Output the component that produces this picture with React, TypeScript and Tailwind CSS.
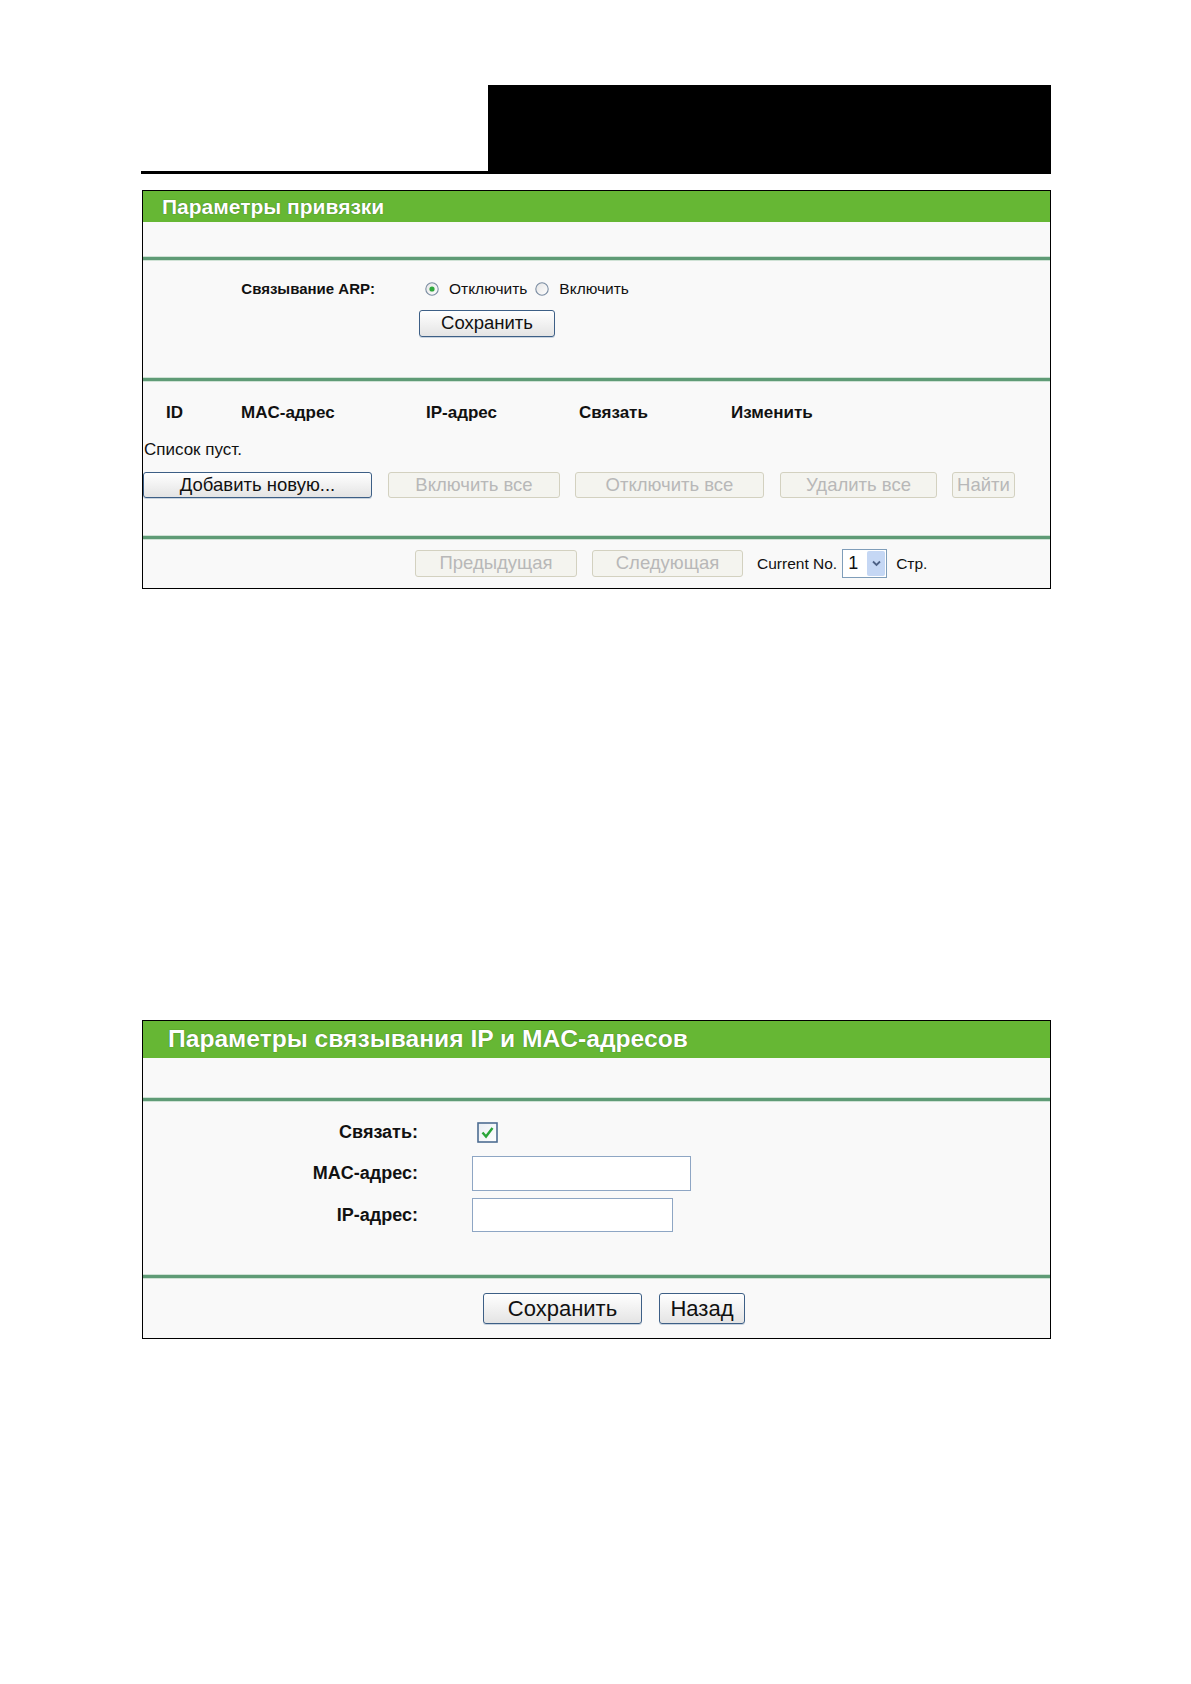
import React from 'react';

const FONT = "font-['Liberation_Sans',Arial,sans-serif]";

function Btn({ label, className = '', disabled = false }: { label: string; className?: string; disabled?: boolean }) {
  return (
    <div
      className={`flex items-center justify-center rounded-[3px] border leading-none ${
        disabled
          ? 'border-[#d3d1c0] bg-[#f4f4ef] text-[#b8b8b8]'
          : 'border-[#3d5f86] bg-gradient-to-b from-white to-[#e4e4e4] text-[#111] shadow-[0_1px_0_#c9d3de]'
      } ${className}`}
    >
      {label}
    </div>
  );
}

function Radio({ checked }: { checked?: boolean }) {
  return (
    <svg width="14" height="14" viewBox="0 0 14 14" className="shrink-0">
      <defs>
        <linearGradient id={checked ? 'rg1' : 'rg2'} x1="0" y1="0" x2="1" y2="1">
          <stop offset="0" stopColor="#e4e4e4" />
          <stop offset="1" stopColor="#ffffff" />
        </linearGradient>
      </defs>
      <circle cx="7" cy="7" r="6.2" fill={`url(#${checked ? 'rg1' : 'rg2'})`} stroke="#7a8ca2" strokeWidth="1.1" />
      {checked && <circle cx="7" cy="7" r="2.6" fill="#2fa83c" />}
    </svg>
  );
}

function Divider() {
  return <div className="h-[3px] bg-[#5f9b76] shadow-[0_1px_0_#cfe2d5,0_-1px_0_#cfe2d5]" />;
}

function Panel({ title, titleBar, titleText = '', children }: { title: string; titleBar: string; titleText?: string; children: React.ReactNode }) {
  return (
    <div className="ml-[1px] w-[909px] border border-black bg-[#f9f9f9]">
      <div className={`flex items-center bg-[#66b734] font-bold text-white [text-shadow:0_0_1px_#2f5a18] ${titleBar}`}>
        <span className={`whitespace-nowrap ${titleText}`}>{title}</span>
      </div>
      {children}
    </div>
  );
}

export default function App() {
  return (
    <div className={`min-h-[1684px] bg-white text-[#111] ${FONT}`}>
      <div className="ml-[141px] w-[910px] pt-[85px]">
        <div className="flex h-[89px]">
          <div className="flex-1 border-b-[3px] border-black" />
          <div className="w-[563px] bg-black" />
        </div>

        <div className="mt-[16px]">
          <Panel title="Параметры привязки" titleBar="h-[31px] pl-[19px] text-[21px]">
            <div className="h-[35px]" />
            <Divider />
            <div className="pt-[19px] pb-[41px]">
              <div className="flex h-[20px] items-center">
                <div className="w-[232px] text-right text-[15px] font-bold">Связывание ARP:</div>
                <div className="ml-[50px] flex items-center text-[15.5px]">
                  <Radio checked />
                  <span className="ml-[10px]">Отключить</span>
                  <span className="ml-[8px]"><Radio /></span>
                  <span className="ml-[10px]">Включить</span>
                </div>
              </div>
              <div className="mt-[11px] flex">
                <Btn label="Сохранить" className="ml-[276px] h-[27px] w-[136px] text-[18.5px]" />
              </div>
            </div>
            <Divider />
            <div className="pt-[22px] pb-[38px]">
              <div className="flex h-[20px] items-center pl-[23px] text-[17px] font-bold">
                <div className="w-[75px]">ID</div>
                <div className="w-[185px]">MAC-адрес</div>
                <div className="w-[153px]">IP-адрес</div>
                <div className="w-[152px]">Связать</div>
                <div>Изменить</div>
              </div>
              <div className="mt-[17px] flex h-[20px] items-center pl-[1px] text-[17px]">Список пуст.</div>
              <div className="mt-[12px] flex h-[26px] text-[18.5px]">
                <Btn label="Добавить новую..." className="w-[229px]" />
                <Btn label="Включить все" disabled className="ml-[16px] w-[172px]" />
                <Btn label="Отключить все" disabled className="ml-[15px] w-[189px]" />
                <Btn label="Удалить все" disabled className="ml-[16px] w-[157px]" />
                <Btn label="Найти" disabled className="ml-[15px] w-[63px]" />
              </div>
            </div>
            <Divider />
            <div className="flex h-[49px] items-center pl-[272px] text-[18.5px]">
              <Btn label="Предыдущая" disabled className="h-[27px] w-[162px]" />
              <Btn label="Следующая" disabled className="ml-[15px] h-[27px] w-[151px]" />
              <span className="ml-[14px] text-[15.5px]">Current No.</span>
              <div className="ml-[5px] flex h-[29px] w-[45px] border border-[#7f9db9] bg-white">
                <span className="flex flex-1 items-center pl-[5px] text-[18px]">1</span>
                <span className="m-[1px] flex w-[18px] items-center justify-center rounded-[2px] bg-[#c5d7f4]">
                  <svg width="9" height="7" viewBox="0 0 9 7">
                    <path d="M1 1.5 L4.5 5 L8 1.5" fill="none" stroke="#4d6185" strokeWidth="1.8" />
                  </svg>
                </span>
              </div>
              <span className="ml-[9px] text-[15.5px]">Стр.</span>
            </div>
          </Panel>
        </div>

        <div className="mt-[431px]">
          <Panel
            title="Параметры связывания IP и MAC-адресов"
            titleBar="h-[37px] pl-[25px] text-[23px]"
            titleText="inline-block origin-left scale-x-[1.07]"
          >
            <div className="h-[40px]" />
            <Divider />
            <div className="pt-[21px] pb-[43px] text-[18px] font-bold">
              <div className="flex h-[21px] items-center">
                <div className="w-[275px] text-right">Связать:</div>
                <svg width="21" height="21" viewBox="0 0 21 21" className="ml-[59px]">
                  <defs>
                    <linearGradient id="cb" x1="0" y1="0" x2="1" y2="1">
                      <stop offset="0" stopColor="#e9eef3" />
                      <stop offset="1" stopColor="#ffffff" />
                    </linearGradient>
                  </defs>
                  <rect x="1" y="1" width="19" height="19" fill="url(#cb)" stroke="#4e6d92" strokeWidth="1.6" />
                  <path d="M5.5 10.5 L9 14.5 L15.5 6" fill="none" stroke="#2aa53a" strokeWidth="2.4" />
                </svg>
              </div>
              <div className="mt-[13px] flex h-[35px] items-center">
                <div className="w-[275px] text-right">MAC-адрес:</div>
                <div className="ml-[54px] h-[35px] w-[219px] border border-[#8ea6c4] bg-white" />
              </div>
              <div className="mt-[7px] flex h-[34px] items-center">
                <div className="w-[275px] text-right">IP-адрес:</div>
                <div className="ml-[54px] h-[34px] w-[201px] border border-[#8ea6c4] bg-white" />
              </div>
            </div>
            <Divider />
            <div className="flex pt-[15px] pb-[14px] pl-[340px] text-[22px]">
              <Btn label="Сохранить" className="h-[31px] w-[159px]" />
              <Btn label="Назад" className="ml-[17px] h-[31px] w-[86px]" />
            </div>
          </Panel>
        </div>
      </div>
    </div>
  );
}
